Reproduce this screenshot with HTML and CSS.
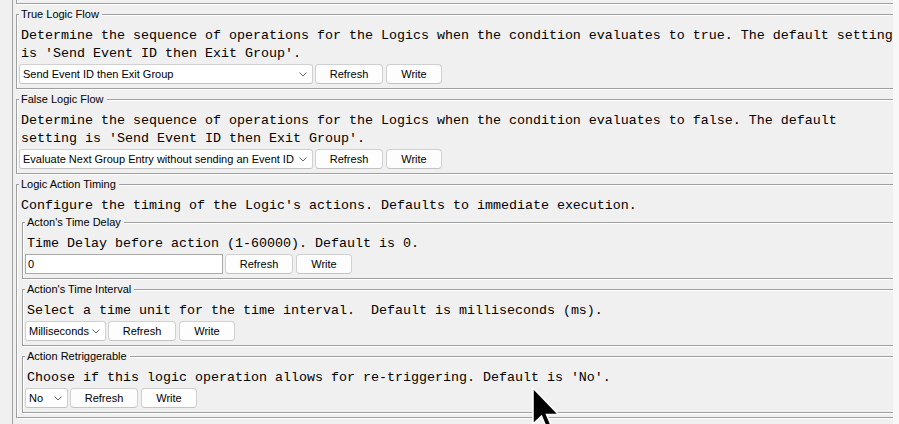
FILE: index.html
```html
<!DOCTYPE html>
<html>
<head>
<meta charset="utf-8">
<link rel="stylesheet" href="styles.css">
</head>
<body>
<div class="window">
  <div class="gutter"></div>
  <div class="panel">
    <div class="prev"></div>

    <fieldset class="group outer">
      <legend>True Logic Flow</legend>
      <p class="desc">Determine the sequence of operations for the Logics when the condition evaluates to true. The default setting is 'Send Event ID then Exit Group'.</p>
      <div class="row">
        <div class="combo combo-wide">
          <select><option>Send Event ID then Exit Group</option></select>
          <svg class="chev" width="8" height="5" viewBox="0 0 8 5"><path d="M0.5 0.5 L4 4 L7.5 0.5" /></svg>
        </div>
        <button class="btn btn-refresh">Refresh</button>
        <button class="btn btn-write">Write</button>
      </div>
    </fieldset>

    <fieldset class="group outer">
      <legend>False Logic Flow</legend>
      <p class="desc">Determine the sequence of operations for the Logics when the condition evaluates to false. The default setting is 'Send Event ID then Exit Group'.</p>
      <div class="row">
        <div class="combo combo-wide">
          <select><option>Evaluate Next Group Entry without sending an Event ID</option></select>
          <svg class="chev" width="8" height="5" viewBox="0 0 8 5"><path d="M0.5 0.5 L4 4 L7.5 0.5" /></svg>
        </div>
        <button class="btn btn-refresh">Refresh</button>
        <button class="btn btn-write">Write</button>
      </div>
    </fieldset>

    <fieldset class="group outer">
      <legend>Logic Action Timing</legend>
      <p class="desc">Configure the timing of the Logic's actions. Defaults to immediate execution.</p>

      <fieldset class="group inner inner-first">
        <legend>Acton's Time Delay</legend>
        <p class="desc">Time Delay before action (1-60000). Default is 0.</p>
        <div class="row">
          <input class="field" type="text" value="0">
          <button class="btn btn-refresh">Refresh</button>
          <button class="btn btn-write">Write</button>
        </div>
      </fieldset>

      <fieldset class="group inner">
        <legend>Action's Time Interval</legend>
        <p class="desc">Select a time unit for the time interval.&nbsp; Default is milliseconds (ms).</p>
        <div class="row">
          <div class="combo combo-ms">
            <select><option>Milliseconds</option></select>
            <svg class="chev" width="8" height="5" viewBox="0 0 8 5"><path d="M0.5 0.5 L4 4 L7.5 0.5" /></svg>
          </div>
          <button class="btn btn-refresh">Refresh</button>
          <button class="btn btn-write">Write</button>
        </div>
      </fieldset>

      <fieldset class="group inner">
        <legend>Action Retriggerable</legend>
        <p class="desc">Choose if this logic operation allows for re-triggering. Default is 'No'.</p>
        <div class="row">
          <div class="combo combo-no">
            <select><option>No</option></select>
            <svg class="chev" width="8" height="5" viewBox="0 0 8 5"><path d="M0.5 0.5 L4 4 L7.5 0.5" /></svg>
          </div>
          <button class="btn btn-refresh">Refresh</button>
          <button class="btn btn-write">Write</button>
        </div>
      </fieldset>
    </fieldset>
  </div>
  <div class="strip"></div>
</div>

<svg class="cursor" width="32" height="48" viewBox="0 0 32 48">
  <polygon points="1,1 1,37 9.5,29 15.5,43.5 20.5,41.5 14.5,27.5 26.5,27.5" />
</svg>
</body>
</html>
```

FILE: styles.css
```css
html, body {
  margin: 0;
  padding: 0;
}

body {
  background: #f0f0f0;
  font-family: "Liberation Sans", Arial, sans-serif;
  font-size: 11px;
  color: #000;
  overflow: hidden;
  height: 424px;
  position: relative;
}

.window {
  display: flex;
  height: 424px;
}

.gutter {
  flex: none;
  width: 12px;
}

.panel {
  flex: none;
  width: 880px;
  height: 424px;
  border-left: 1px solid #a0a0a0;
  overflow: hidden;
}

.strip {
  flex: 1;
  background: #f8f8f8;
}

.prev {
  width: 900px;
  height: 3px;
  margin-left: 3px;
  border-left: 1px solid #a0a0a0;
  border-bottom: 1px solid #a0a0a0;
  box-shadow: inset 1px 0 0 #fff, 0 1px 0 #fff;
}

.group {
  margin: 3px 0 0 3px;
  padding: 5px 2px 4px;
  border: 1px solid #a0a0a0;
  box-shadow: inset 1px 1px 0 #fff, 1px 1px 0 #fff;
  min-width: 0;
}

.outer {
  width: 878px;
}

.inner-first {
  margin-top: 0;
}

.group > legend {
  padding: 0 3px 0 2px;
  line-height: 15px;
  font-size: 11px;
  background: #f0f0f0;
  white-space: nowrap;
}

.desc {
  margin: 0;
  padding-left: 2px;
  font-family: "Liberation Mono", "Courier New", monospace;
  font-size: 13.333px;
  line-height: 18px;
  color: #000;
}

.row {
  display: flex;
  align-items: center;
  height: 20px;
  margin-top: 1px;
}

.combo {
  position: relative;
  flex: none;
  height: 20px;
}

.combo select {
  appearance: none;
  -webkit-appearance: none;
  box-sizing: border-box;
  width: 100%;
  height: 20px;
  margin: 0;
  padding: 0 0 0 3px;
  border: 1px solid #d0d0d0;
  border-bottom-color: #c2c2c2;
  border-radius: 3px;
  background: #fff;
  color: #000;
  font-family: "Liberation Sans", Arial, sans-serif;
  font-size: 11px;
  line-height: 18px;
  outline: none;
}

.combo-wide { width: 294px; }
.combo-ms { width: 81px; }
.combo-no { width: 43px; }

.chev {
  position: absolute;
  right: 6px;
  top: 8px;
  fill: none;
  stroke: #666;
  stroke-width: 1;
}

.field {
  box-sizing: border-box;
  flex: none;
  width: 198px;
  height: 20px;
  margin: 0;
  padding: 0 0 0 2px;
  border: 1px solid #a9a9a9;
  border-radius: 0;
  background: #fff;
  color: #000;
  font-family: "Liberation Sans", Arial, sans-serif;
  font-size: 11px;
  outline: none;
}

.btn {
  box-sizing: border-box;
  flex: none;
  height: 20px;
  margin: 0;
  padding: 0;
  border: 1px solid #d0d0d0;
  border-bottom-color: #c4c4c4;
  border-radius: 4px;
  background: #fdfdfd;
  color: #000;
  font-family: "Liberation Sans", Arial, sans-serif;
  font-size: 11px;
  line-height: 18px;
}

.btn-refresh {
  width: 68px;
  margin-left: 2px;
}

.btn-write {
  width: 56px;
  margin-left: 3px;
}

.cursor {
  position: absolute;
  left: 532px;
  top: 387px;
  overflow: visible;
}

.cursor polygon {
  fill: #000;
  stroke: #fff;
  stroke-width: 1.5;
  stroke-linejoin: miter;
}
```
